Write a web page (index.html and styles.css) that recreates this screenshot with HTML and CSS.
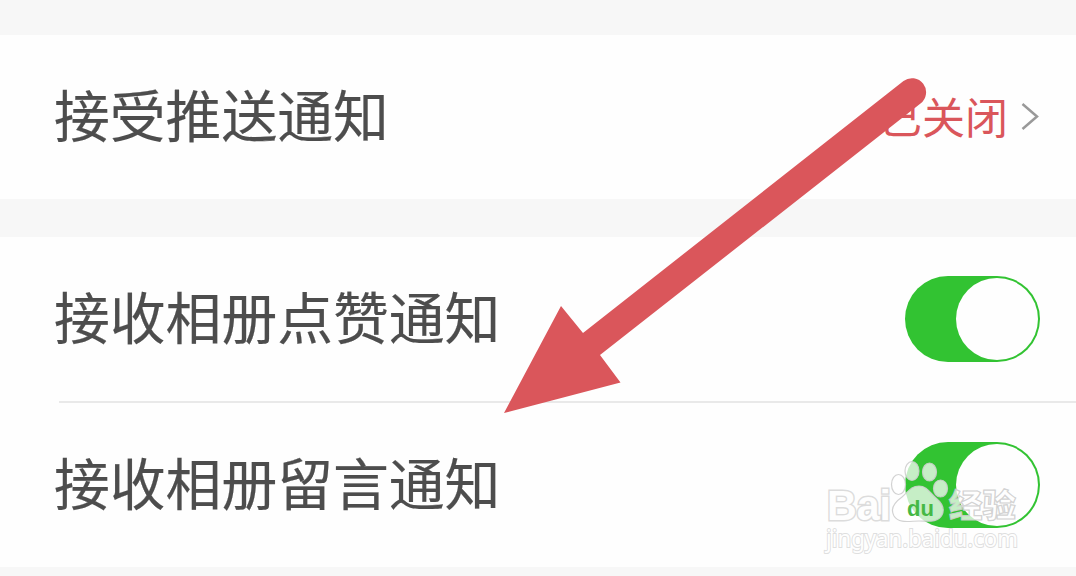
FILE: index.html
```html
<!DOCTYPE html>
<html lang="zh-CN">
<head>
    <meta charset="UTF-8">
    <meta name="viewport" content="width=device-width, initial-scale=1.0">
    <title>通知设置</title>
    <link rel="stylesheet" href="styles.css">
</head>
<body>
    <main class="settings">
        <section class="group">
            <div class="row">
                <span class="label">接受推送通知</span>
                <span class="status">
                    <span class="status-text">已关闭</span>
                    <svg class="chevron" width="20" height="30" viewBox="0 0 20 30">
                        <path d="M2.500 2 L17 14.500 L2.500 27"/>
                    </svg>
                </span>
            </div>
        </section>

        <section class="group">
            <div class="row">
                <span class="label">接收相册点赞通知</span>
                <span class="toggle"><span class="knob"></span></span>
            </div>
            <div class="divider"></div>
            <div class="row">
                <span class="label">接收相册留言通知</span>
                <span class="toggle"><span class="knob"></span></span>
            </div>
        </section>
    </main>

    <!-- Arrow and watermark on top of the list -->
    <svg class="overlay" width="1076" height="576" viewBox="0 0 1076 576">
        <path class="arrow" d="M504 413 L561 306 L583 333 L903.500 81 A14 14 0 0 1 920.500 103.500 L600 355 L620.500 382.500 Z"/>

        <g class="watermark">
            <text class="brand" x="827" y="520" textLength="64" lengthAdjust="spacingAndGlyphs">Bai</text>
            <ellipse cx="898.500" cy="484.500" rx="7" ry="10"/>
            <ellipse cx="912" cy="471" rx="7" ry="9.500"/>
            <ellipse cx="929.500" cy="472" rx="7" ry="9"/>
            <ellipse cx="940.500" cy="488.500" rx="7" ry="8.500"/>
            <path d="M919 486 C927 486 930 493 936 498 C942 503 945 509 942 515 C938 523 928 521 919 521 C910 521 899 524 894 516 C890 509 895 502 902 497 C908 492 911 486 919 486 Z"/>
            <text class="du" x="907" y="516" textLength="27" lengthAdjust="spacingAndGlyphs">du</text>
            <text class="cn" x="949" y="517" textLength="67" lengthAdjust="spacingAndGlyphs">经验</text>
            <text class="url" x="826" y="547" textLength="192" lengthAdjust="spacingAndGlyphs">jingyan.baidu.com</text>
        </g>
    </svg>
</body>
</html>
```

FILE: styles.css
```css
:root {
    --bg: #f7f7f7;
    --text: #4d4d4d;
    --red: #da565b;
    --green: #32c332;
}

body {
    font-family: "Noto Sans CJK SC", sans-serif;
    background: var(--bg);
    color: var(--text);
    margin: 0;
    height: 576px;
    overflow: hidden;
    position: relative;
}

.settings {
    display: flex;
    flex-direction: column;
    gap: 38px;
    padding-top: 35px;
}

.group {
    background: #fefefe;
}

.row {
    display: flex;
    justify-content: space-between;
    align-items: center;
    box-sizing: border-box;
    height: 164px;
    padding: 0 36px 0 54px;
}

.label {
    font-size: 55.800px;
    line-height: 80px;
    padding-bottom: 8px;
    -webkit-text-stroke: 0.2px var(--text);
}

.status {
    display: flex;
    align-items: center;
    gap: 12px;
    font-size: 43px;
    line-height: 60px;
    color: var(--red);
}

.status-text {
    padding-bottom: 4px;
}

.chevron {
    fill: none;
    stroke: #999;
    stroke-width: 2.500;
}

.divider {
    height: 2px;
    margin-left: 59px;
    background: #e9e9e9;
}

.toggle {
    display: flex;
    justify-content: flex-end;
    box-sizing: border-box;
    width: 135px;
    height: 86px;
    padding: 2px;
    border-radius: 43px;
    background: var(--green);
}

.knob {
    width: 82px;
    height: 82px;
    border-radius: 50%;
    background: #fefefe;
}

.overlay {
    position: absolute;
    top: 0;
    left: 0;
}

.arrow {
    fill: var(--red);
}

.watermark {
    fill: rgba(255, 255, 255, 0.72);
    stroke: rgba(205, 205, 205, 0.9);
    stroke-width: 1.200;
}

.brand {
    font: bold 42px "Liberation Sans", sans-serif;
    paint-order: stroke;
    stroke-width: 3;
    stroke: rgba(205, 205, 205, 0.7);
    fill: #fefefe;
}

.du {
    font: bold 22px "Liberation Sans", sans-serif;
    fill: #45b945;
    stroke: none;
}

.cn {
    font: 900 32px "Noto Sans CJK SC", sans-serif;
}

.url {
    font: 24px "Noto Sans", sans-serif;
    paint-order: stroke;
    stroke-width: 2;
    stroke: rgba(205, 205, 205, 0.65);
    fill: #fefefe;
}
```
